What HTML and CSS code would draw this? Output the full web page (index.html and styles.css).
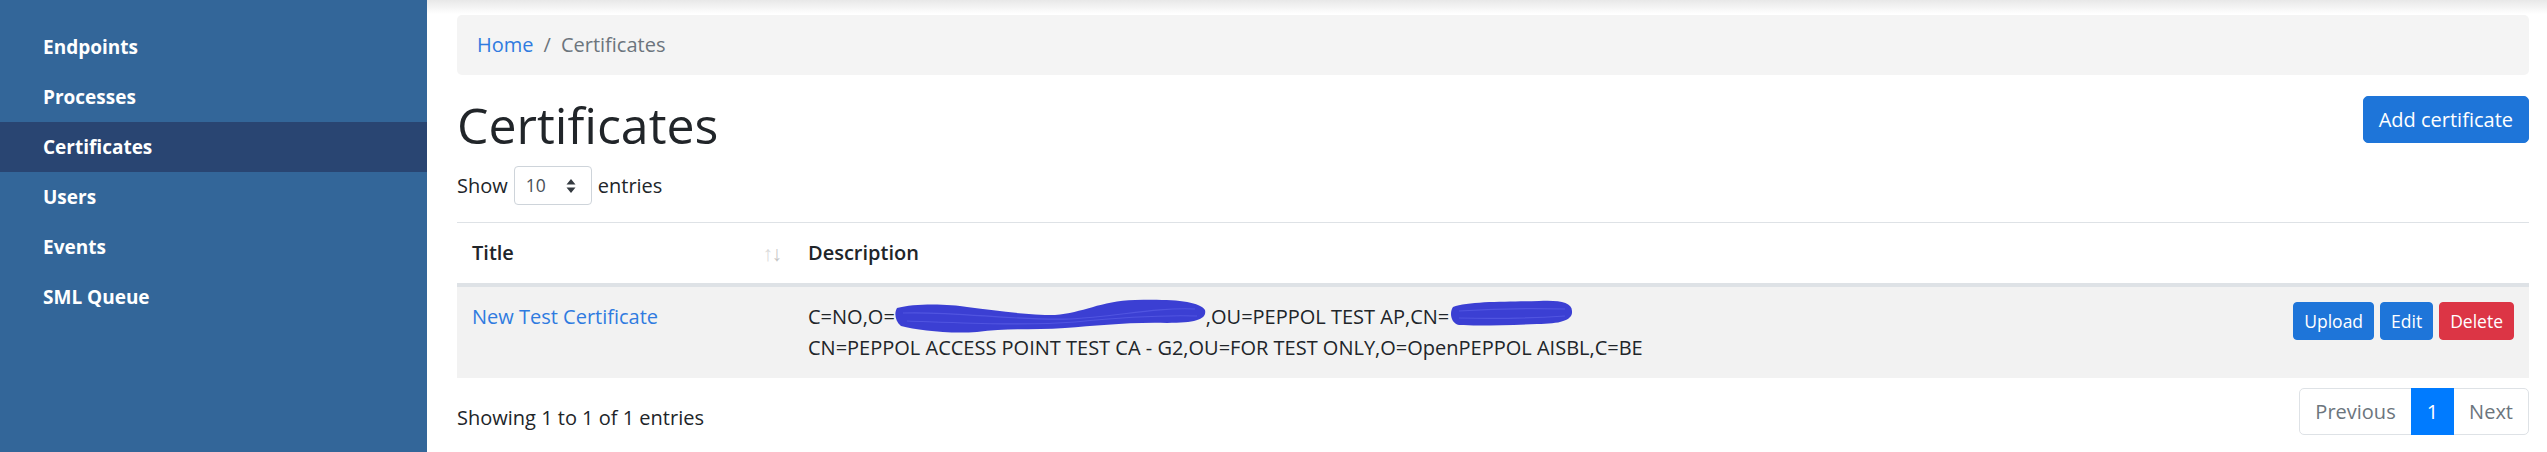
FILE: index.html
```html
<!DOCTYPE html>
<html lang="en">
<head>
<meta charset="utf-8">
<title>Certificates</title>
<link rel="stylesheet" href="styles.css">
</head>
<body>
<div class="layout">
  <aside class="sidebar">
    <nav class="nav">
      <a class="nav-link" href="#">Endpoints</a>
      <a class="nav-link" href="#">Processes</a>
      <a class="nav-link active" href="#">Certificates</a>
      <a class="nav-link" href="#">Users</a>
      <a class="nav-link" href="#">Events</a>
      <a class="nav-link" href="#">SML Queue</a>
    </nav>
  </aside>
  <main class="main">
    <nav class="breadcrumb">
      <a href="#">Home</a><span class="sep">/</span><span class="current">Certificates</span>
    </nav>
    <div class="page-head">
      <h1>Certificates</h1>
      <button class="btn btn-primary">Add certificate</button>
    </div>
    <div class="length">
      <span>Show</span>
      <span class="select"><span>10</span>
        <svg class="select-arrows" width="10" height="16" viewBox="0 0 10 16"><path d="M5 1 L9.5 6.5 H0.5 Z M5 15 L9.5 9.5 H0.5 Z" fill="#343a40"/></svg>
      </span>
      <span>entries</span>
    </div>
    <table class="table">
      <colgroup><col class="col-title"><col><col class="col-actions"></colgroup>
      <thead>
        <tr><th class="sortable">Title</th><th>Description</th><th></th></tr>
      </thead>
      <tbody>
        <tr>
          <td><a href="#" class="link">New Test Certificate</a></td>
          <td class="desc">C=NO,O=<span class="blob blob1"><svg width="311" height="34" viewBox="0 0 311 34"><path d="M2 9 C20 4 55 5 72 8 C105 12 130 16 160 16 C188 14 205 2 240 1 C278 0 304 2 310 11 C312 20 302 24 272 24 C232 23 202 27 170 29 C140 31 112 29 82 33 C52 35 22 31 6 27 C0 22 -1 14 2 9 Z" fill="#3b3fd3"/><path d="M8 14 C60 12 120 22 175 20 C220 18 260 8 300 10 M12 22 C70 24 130 27 180 23 C220 19 270 16 302 17" stroke="#5a5ee6" stroke-width="1.2" fill="none" opacity="0.7"/></svg></span>,OU=PEPPOL TEST AP,CN=<span class="blob blob2"><svg width="124" height="28" viewBox="0 0 124 28"><path d="M4 8 C20 2 60 3 90 2 C110 1 123 3 123 12 C124 21 112 25 88 25 C60 26 30 27 10 26 C2 24 0 14 4 8 Z" fill="#3b3fd3"/><path d="M10 12 C40 10 80 9 116 10 M10 19 C45 20 85 19 116 17" stroke="#5a5ee6" stroke-width="1.2" fill="none" opacity="0.7"/></svg></span><br>CN=PEPPOL ACCESS POINT TEST CA - G2,OU=FOR TEST ONLY,O=OpenPEPPOL AISBL,C=BE</td>
          <td>
            <div class="actions">
              <button class="btn btn-sm btn-primary">Upload</button>
              <button class="btn btn-sm btn-primary">Edit</button>
              <button class="btn btn-sm btn-danger">Delete</button>
            </div>
          </td>
        </tr>
      </tbody>
    </table>
    <div class="table-footer">
      <div class="info">Showing 1 to 1 of 1 entries</div>
      <ul class="pagination">
        <li class="page-item disabled"><a class="page-link" href="#">Previous</a></li>
        <li class="page-item active"><a class="page-link" href="#">1</a></li>
        <li class="page-item disabled"><a class="page-link" href="#">Next</a></li>
      </ul>
    </div>
  </main>
</div>
</body>
</html>
```

FILE: styles.css
```css
* { box-sizing: border-box; }

body {
  margin: 0;
  font-family: "Open Sans", "Noto Sans", sans-serif;
  font-size: 20px;
  line-height: 1.5;
  color: #212529;
  background: #fff;
}

.layout {
  display: flex;
  height: 452px;
  overflow: hidden;
}

.sidebar {
  width: 427px;
  flex: none;
  background: #336699;
  padding-top: 22px;
}

.nav { display: flex; flex-direction: column; }

.nav-link {
  display: block;
  padding: 10px 43px;
  color: #fff;
  font-weight: 700;
  font-size: 19px;
  line-height: 30px;
  text-decoration: none;
}

.nav-link.active { background: #294572; }

.main {
  flex: 1;
  min-width: 0;
  padding: 15px 18px 0 30px;
  background: linear-gradient(to bottom, #e8e8e8 0, #ffffff 14px) no-repeat;
}

.breadcrumb {
  display: flex;
  align-items: center;
  background: #f4f4f4;
  border-radius: 5px;
  padding: 15px 20px;
  line-height: 30px;
  margin-bottom: 20px;
}

.breadcrumb a { color: #2f7be0; text-decoration: none; }
.breadcrumb .sep { padding: 0 10px; color: #6c757d; }
.breadcrumb .current { color: #6c757d; }

.page-head {
  display: flex;
  justify-content: space-between;
  align-items: flex-start;
}

.page-head h1 {
  margin: 0 0 10px;
  font-size: 50px;
  font-weight: 400;
  line-height: 60px;
}

.btn {
  font-family: inherit;
  border: 1px solid transparent;
  border-radius: 5px;
  font-size: 20px;
  line-height: 30px;
  padding: 7.5px 15px;
  color: #fff;
  cursor: pointer;
}

.btn-primary { background: #1e75d9; border-color: #1e75d9; }
.btn-danger { background: #dc3545; border-color: #dc3545; }

.page-head .btn { margin-top: 1px; }

.btn-sm {
  font-size: 17.5px;
  line-height: 26.25px;
  padding: 5px 10px;
  border-radius: 4px;
}

.length {
  display: flex;
  align-items: center;
  height: 39px;
  margin-top: 1px;
}

.select {
  display: inline-flex;
  align-items: center;
  justify-content: space-between;
  width: 78px;
  height: 39px;
  margin: 0 6px;
  padding: 0 15px 0 11px;
  border: 1px solid #ced4da;
  border-radius: 4px;
  font-size: 17.5px;
  color: #495057;
}

.table {
  width: 100%;
  border-collapse: collapse;
  margin-top: 17px;
}

.col-title { width: 336px; }
.col-actions { width: 250px; }

.table th,
.table td {
  padding: 15px;
  text-align: left;
  vertical-align: top;
  line-height: 30px;
}

.table thead th {
  border-top: 1px solid #dee2e6;
  border-bottom: 4px solid #dee2e6;
  font-weight: 600;
}

.table th.sortable { position: relative; }

.table th.sortable::before,
.table th.sortable::after {
  position: absolute;
  top: 15px;
  font-weight: 300;
  font-size: 21px;
  line-height: 30px;
}

.table th.sortable::before { content: "\2191"; right: 20px; color: #dadada; }
.table th.sortable::after { content: "\2193"; right: 11px; color: #c6c6c6; }

.table tbody tr { background: #f2f2f2; }

.link { color: #2f7be0; text-decoration: none; }

.blob {
  display: inline-block;
  line-height: 0;
  vertical-align: middle;
}

.blob1 { margin-top: -6px; }
.blob2 { margin-top: -12px; }

.actions {
  display: flex;
  justify-content: flex-end;
  gap: 6px;
}

.table-footer {
  display: flex;
  justify-content: space-between;
  align-items: flex-start;
  margin-top: 10px;
}

.info { padding-top: 15px; line-height: 30px; }

.pagination {
  display: flex;
  list-style: none;
  margin: 0;
  padding: 0;
}

.page-link {
  display: block;
  padding: 10px 15px;
  line-height: 25px;
  border: 1px solid #dee2e6;
  margin-left: -1px;
  color: #6c757d;
  background: #fff;
  text-decoration: none;
}

.page-item:first-child .page-link { margin-left: 0; border-radius: 5px 0 0 5px; }
.page-item:last-child .page-link { border-radius: 0 5px 5px 0; }

.page-item.active .page-link {
  position: relative;
  background: #007bff;
  border-color: #007bff;
  color: #fff;
}
```
